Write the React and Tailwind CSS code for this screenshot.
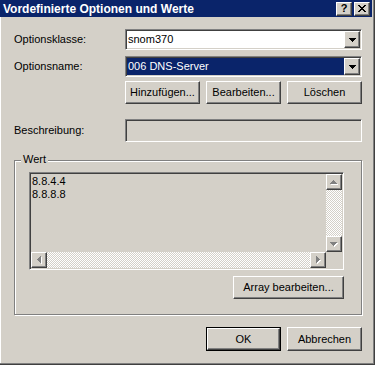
import React from 'react';

const raised =
  'bg-[#d4d0c8] border border-t-white border-l-white border-r-[#404040] border-b-[#404040] shadow-[inset_-1px_-1px_0_#808080]';
const sunken =
  'border border-t-[#808080] border-l-[#808080] border-r-white border-b-white shadow-[inset_1px_1px_0_#404040,inset_-1px_-1px_0_#d4d0c8] p-px';
const checker =
  '[background-image:repeating-conic-gradient(#ffffff_0%_25%,#d4d0c8_0%_50%)] [background-size:2px_2px]';

// kleine Pfeile, pixelgenau
const ARROWS = {
  down: { w: 7, h: 4, d: 'M0 0h7v1H0zM1 1h5v1H1zM2 2h3v1H2zM3 3h1v1H3z' },
  up: { w: 7, h: 4, d: 'M3 0h1v1H3zM2 1h3v1H2zM1 2h5v1H1zM0 3h7v1H0z' },
  left: { w: 4, h: 7, d: 'M3 0h1v7H3zM2 1h1v5H2zM1 2h1v3H1zM0 3h1v1H0z' },
  right: { w: 4, h: 7, d: 'M0 0h1v7H0zM1 1h1v5H1zM2 2h1v3H2zM3 3h1v1H3z' },
};

function Arrow({ dir, disabled }) {
  const a = ARROWS[dir];
  if (!disabled) {
    return (
      <svg width={a.w} height={a.h} viewBox={`0 0 ${a.w} ${a.h}`} shapeRendering="crispEdges">
        <path d={a.d} fill="#000" />
      </svg>
    );
  }
  return (
    <svg width={a.w + 1} height={a.h + 1} viewBox={`0 0 ${a.w + 1} ${a.h + 1}`} shapeRendering="crispEdges">
      <path d={a.d} fill="#fff" transform="translate(1 1)" />
      <path d={a.d} fill="#808080" />
    </svg>
  );
}

function Button({ children, className = '' }) {
  return (
    <div className={`${raised} h-[23px] flex items-center justify-center text-[11px] text-black ${className}`}>
      {children}
    </div>
  );
}

function Combo({ value, selected }) {
  return (
    <div className={`${sunken} bg-white w-[237px] h-[21px] flex`}>
      <div
        className={`flex-1 flex items-center pl-[1px] text-[11px] ${
          selected ? 'bg-[#0a246a] text-white' : 'text-black'
        }`}
      >
        {value}
      </div>
      <div className={`${raised} w-[16px] h-[17px] flex items-center justify-center`}>
        <Arrow dir="down" />
      </div>
    </div>
  );
}

function ScrollBtn({ dir, className = '' }) {
  return (
    <div className={`${raised} w-[16px] h-[16px] flex items-center justify-center shrink-0 ${className}`}>
      <Arrow dir={dir} disabled />
    </div>
  );
}

export default function App() {
  return (
    <div
      className="w-[375px] h-[365px] bg-[#d4d0c8] border-r border-b border-[#404040] flex flex-col text-black"
      style={{ fontFamily: '"Liberation Sans", Arial, sans-serif' }}
    >
      <div className="flex-1 flex flex-col border-r border-b border-[#808080] pr-px">
        {/* Titelleiste */}
        <div className="h-[17px] bg-[#0a246a] flex items-center pl-[3px] pr-[2px]">
          <span className="flex-1 text-white font-bold text-[12px] leading-none">
            Vordefinierte Optionen und Werte
          </span>
          <div className={`${raised} w-[16px] h-[14px] flex items-center justify-center text-[11px] font-bold leading-none`}>
            ?
          </div>
          <div className={`${raised} w-[16px] h-[14px] ml-[2px] flex items-center justify-center`}>
            <svg width="8" height="7" viewBox="0 0 8 7" shapeRendering="crispEdges">
              <path
                d="M0 0h2v1H0zM6 0h2v1H6zM1 1h2v1H1zM5 1h2v1H5zM2 2h4v1H2zM3 3h2v1H3zM2 4h4v1H2zM1 5h2v1H1zM5 5h2v1H5zM0 6h2v1H0zM6 6h2v1H6z"
                fill="#000"
              />
            </svg>
          </div>
        </div>

        {/* Inhalt */}
        <div className="flex-1 flex flex-col border-l border-white pl-[13px] pr-[10px] pt-[12px] text-[11px]">
          <div className="flex items-center">
            <span className="w-[111px]">Optionsklasse:</span>
            <Combo value="snom370" />
          </div>
          <div className="flex items-center mt-[6px]">
            <span className="w-[111px]">Optionsname:</span>
            <Combo value="006 DNS-Server" selected />
          </div>
          <div className="flex mt-[4px] pl-[111px] gap-[6px]">
            <Button className="w-[75px]">Hinzufügen...</Button>
            <Button className="w-[75px]">Bearbeiten...</Button>
            <Button className="w-[75px]">Löschen</Button>
          </div>

          <div className="flex items-center mt-[15px]">
            <span className="w-[111px]">Beschreibung:</span>
            <div className={`${sunken} w-[237px] h-[23px] bg-[#d4d0c8]`} />
          </div>

          {/* Gruppe Wert */}
          <div className="relative mt-[18px] w-[348px] h-[155px] border border-[#808080] shadow-[inset_1px_1px_0_#ffffff,1px_1px_0_#ffffff] pl-[14px] pt-[11px] flex flex-col">
            <span className="absolute top-[-8px] left-[6px] px-[2px] bg-[#d4d0c8] leading-[13px]">Wert</span>

            <div className={`${sunken} w-[315px] h-[98px] bg-[#d4d0c8] flex flex-col`}>
              <div className="flex-1 flex min-h-0">
                <div className="flex-1 pl-[1px] pt-[1px] leading-[13px]">
                  <div>8.8.4.4</div>
                  <div>8.8.8.8</div>
                </div>
                <div className={`w-[16px] flex flex-col ${checker}`}>
                  <ScrollBtn dir="up" />
                  <div className="flex-1" />
                  <ScrollBtn dir="down" />
                </div>
              </div>
              <div className="h-[16px] flex">
                <div className={`flex-1 flex ${checker}`}>
                  <ScrollBtn dir="left" />
                  <div className="flex-1" />
                  <ScrollBtn dir="right" />
                </div>
                <div className="w-[16px] bg-[#d4d0c8]" />
              </div>
            </div>

            <div className="flex justify-end w-[315px] mt-[6px]">
              <Button className="w-[111px]">Array bearbeiten...</Button>
            </div>
          </div>

          {/* Dialogknöpfe */}
          <div className="flex mt-[12px] pl-[192px] gap-[6px]">
            <div className="w-[75px] h-[24px] border border-black">
              <Button className="w-full h-full">OK</Button>
            </div>
            <Button className="w-[75px] h-[24px]">Abbrechen</Button>
          </div>
        </div>
      </div>
    </div>
  );
}
